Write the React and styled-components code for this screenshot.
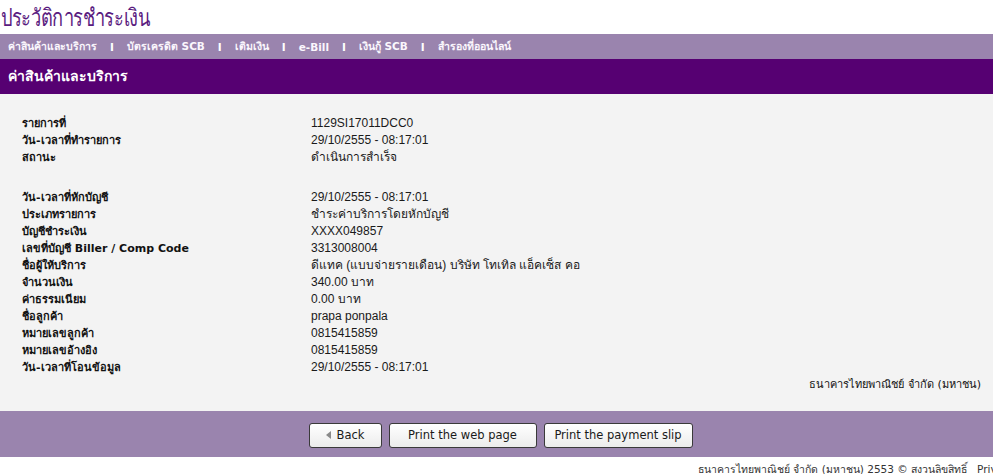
import React from "react";
import styled, { createGlobalStyle } from "styled-components";

const Global = createGlobalStyle`
  html, body { margin: 0; padding: 0; background: #ffffff; }
  body { overflow: hidden; font-family: "Liberation Sans", "Noto Sans", sans-serif; }
`;

const Page = styled.div`
  width: 993px;
  display: flex;
  flex-direction: column;
`;

const Title = styled.h1`
  margin: 0;
  height: 34px;
  padding-left: 1px;
  font-family: "Noto Sans", "DejaVu Sans", sans-serif;
  font-size: 24px;
  font-weight: 500;
  line-height: 34px;
  color: #5a1b80;
  letter-spacing: -0.4px;
  transform: scaleX(0.76);
  transform-origin: left center;
  white-space: nowrap;
`;

const Nav = styled.nav`
  height: 25px;
  background: #9a84ae;
  display: flex;
  align-items: center;
  padding-left: 8px;
  gap: 11px;
  font-family: "DejaVu Sans", "Noto Sans", sans-serif;
  font-size: 10.5px;
  font-weight: 700;
  color: #fbf7fd;
`;

const NavItem = styled.span`
  white-space: nowrap;
`;

const NavSep = styled.span`
  padding: 0 2px;
  color: #ffffff;
`;

const SectionHead = styled.div`
  height: 35px;
  background: #560072;
  display: flex;
  align-items: center;
  padding-left: 8px;
  padding-bottom: 1px;
  box-sizing: border-box;
  font-family: "DejaVu Sans", "Noto Sans", sans-serif;
  font-size: 14px;
  font-weight: 700;
  color: #ffffff;
`;

const Content = styled.div`
  background: #f3f3f3;
  padding: 21px 12px 18px 22px;
  display: flex;
  flex-direction: column;
`;

const Row = styled.div`
  display: grid;
  grid-template-columns: 289px 1fr;
  height: 17px;
  line-height: 17px;
  font-size: 12px;
  color: #111;
`;

const Label = styled.div`
  font-family: "DejaVu Sans", "Noto Sans", sans-serif;
  font-weight: 700;
  font-size: 11px;
  color: #111;
  white-space: nowrap;
`;

const Value = styled.div`
  font-family: "Liberation Sans", "Noto Sans", sans-serif;
  font-size: 12px;
  color: #1a1a1a;
  white-space: nowrap;
`;

const Spacer = styled.div`
  height: 23px;
`;

const BankName = styled.div`
  text-align: right;
  height: 17px;
  line-height: 17px;
  font-family: "DejaVu Sans", "Noto Sans", sans-serif;
  font-size: 11px;
  color: #111;
`;

const ButtonBar = styled.div`
  height: 46px;
  background: #9a84ae;
  display: flex;
  justify-content: center;
  align-items: flex-start;
  padding: 12px 0 0 8px;
  box-sizing: border-box;
  gap: 7px;
`;

const Button = styled.button`
  height: 25px;
  width: ${(p) => p.$w}px;
  box-sizing: border-box;
  border: 1px solid #3a3a3a;
  border-radius: 3px;
  background: linear-gradient(#ffffff, #ececec);
  font-family: "DejaVu Sans", "Noto Sans", sans-serif;
  font-size: 11.5px;
  color: #1a1a1a;
  display: flex;
  align-items: center;
  justify-content: center;
  gap: 6px;
  padding: 0;
  padding-bottom: 2px;
  cursor: pointer;
`;

const Arrow = styled.span`
  width: 0;
  height: 0;
  border-top: 4px solid transparent;
  border-bottom: 4px solid transparent;
  border-right: 5px solid #8a8a8a;
`;

const Footer = styled.div`
  height: 16px;
  padding-left: 698px;
  padding-top: 4px;
  white-space: nowrap;
  font-family: "DejaVu Sans", "Noto Sans", sans-serif;
  font-size: 10.5px;
  color: #333;
  overflow: hidden;
`;

const navItems = [
  "ค่าสินค้าและบริการ",
  "บัตรเครดิต SCB",
  "เติมเงิน",
  "e-Bill",
  "เงินกู้ SCB",
  "สำรองที่ออนไลน์",
];

const top = [
  ["รายการที่", "1129SI17011DCC0"],
  ["วัน-เวลาที่ทำรายการ", "29/10/2555 - 08:17:01"],
  ["สถานะ", "ดำเนินการสำเร็จ"],
];

const details = [
  ["วัน-เวลาที่หักบัญชี", "29/10/2555 - 08:17:01"],
  ["ประเภทรายการ", "ชำระค่าบริการโดยหักบัญชี"],
  ["บัญชีชำระเงิน", "XXXX049857"],
  ["เลขที่บัญชี Biller / Comp Code", "3313008004"],
  ["ชื่อผู้ให้บริการ", "ดีแทค (แบบจ่ายรายเดือน) บริษัท โทเทิล แอ็คเซ็ส คอ"],
  ["จำนวนเงิน", "340.00 บาท"],
  ["ค่าธรรมเนียม", "0.00 บาท"],
  ["ชื่อลูกค้า", "prapa ponpala"],
  ["หมายเลขลูกค้า", "0815415859"],
  ["หมายเลขอ้างอิง", "0815415859"],
  ["วัน-เวลาที่โอนข้อมูล", "29/10/2555 - 08:17:01"],
];

export default function App() {
  return (
    <>
      <Global />
      <Page>
        <Title>ประวัติการชำระเงิน</Title>
        <Nav>
          {navItems.map((n, i) => (
            <React.Fragment key={n}>
              {i > 0 && <NavSep>I</NavSep>}
              <NavItem>{n}</NavItem>
            </React.Fragment>
          ))}
        </Nav>
        <SectionHead>ค่าสินค้าและบริการ</SectionHead>
        <Content>
          {top.map(([l, v]) => (
            <Row key={l}>
              <Label>{l}</Label>
              <Value>{v}</Value>
            </Row>
          ))}
          <Spacer />
          {details.map(([l, v]) => (
            <Row key={l}>
              <Label>{l}</Label>
              <Value>{v}</Value>
            </Row>
          ))}
          <BankName>ธนาคารไทยพาณิชย์ จำกัด (มหาชน)</BankName>
        </Content>
        <ButtonBar>
          <Button $w={73}>
            <Arrow />
            Back
          </Button>
          <Button $w={148}>Print the web page</Button>
          <Button $w={149}>Print the payment slip</Button>
        </ButtonBar>
        <Footer>ธนาคารไทยพาณิชย์ จำกัด (มหาชน) 2553 © สงวนลิขสิทธิ์ &nbsp; Privacy Policy</Footer>
      </Page>
    </>
  );
}
